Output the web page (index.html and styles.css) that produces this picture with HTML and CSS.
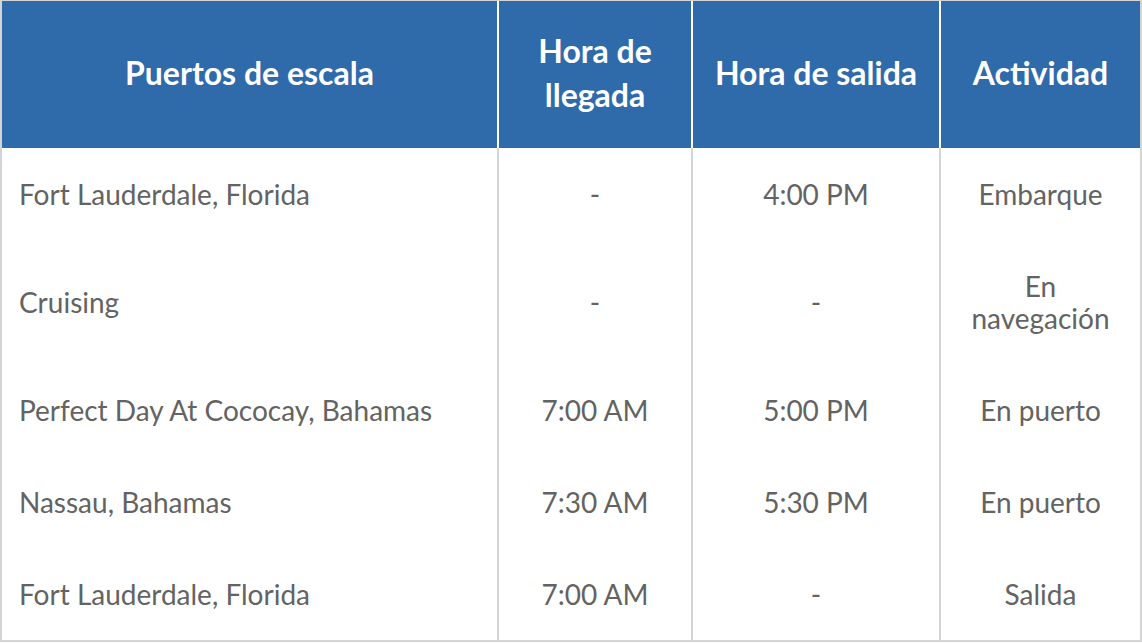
FILE: index.html
```html
<!DOCTYPE html>
<html lang="es">
<head>
<meta charset="utf-8">
<title>Itinerario</title>
<link rel="stylesheet" href="styles.css">
</head>
<body>
<table class="itinerary">
  <colgroup>
    <col class="c-port">
    <col class="c-arr">
    <col class="c-dep">
    <col class="c-act">
  </colgroup>
  <thead>
    <tr>
      <th>Puertos de escala</th>
      <th>Hora de llegada</th>
      <th>Hora de salida</th>
      <th>Actividad</th>
    </tr>
  </thead>
  <tbody>
    <tr>
      <td class="port">Fort Lauderdale, Florida</td>
      <td>-</td>
      <td>4:00 PM</td>
      <td>Embarque</td>
    </tr>
    <tr>
      <td class="port">Cruising</td>
      <td>-</td>
      <td>-</td>
      <td>En navegación</td>
    </tr>
    <tr>
      <td class="port">Perfect Day At Cococay, Bahamas</td>
      <td>7:00 AM</td>
      <td>5:00 PM</td>
      <td>En puerto</td>
    </tr>
    <tr>
      <td class="port">Nassau, Bahamas</td>
      <td>7:30 AM</td>
      <td>5:30 PM</td>
      <td>En puerto</td>
    </tr>
    <tr>
      <td class="port">Fort Lauderdale, Florida</td>
      <td>7:00 AM</td>
      <td>-</td>
      <td>Salida</td>
    </tr>
  </tbody>
</table>
</body>
</html>
```

FILE: styles.css
```css
html, body {
  margin: 0;
  padding: 0;
  background: #ffffff;
}

.itinerary {
  width: 1142px;
  table-layout: fixed;
  border-collapse: separate;
  border-spacing: 0;
  border-top: 1px solid #d4d4d4;
  border-left: 2px solid #d4d4d4;
  border-right: 2px solid #d4d4d4;
  border-bottom: 2px solid #d4d4d4;
  font-family: Lato, "Open Sans", sans-serif;
}

.c-port { width: 495px; }
.c-arr { width: 194px; }
.c-dep { width: 248px; }
.c-act { width: 201px; }

.itinerary th {
  background: #2f6aab;
  color: #ffffff;
  font-weight: 700;
  font-size: 32px;
  line-height: 44px;
  padding: 28px 14px 31px;
  text-align: center;
  border-left: 2px solid #ffffff;
}

.itinerary th:first-child {
  border-left: none;
}

.itinerary td {
  color: #636363;
  font-size: 28px;
  line-height: 32px;
  padding: 30px 14px;
  text-align: center;
  border-left: 2px solid #d4d4d4;
}

.itinerary td.port {
  text-align: left;
  padding-left: 17px;
  border-left: none;
}
```
